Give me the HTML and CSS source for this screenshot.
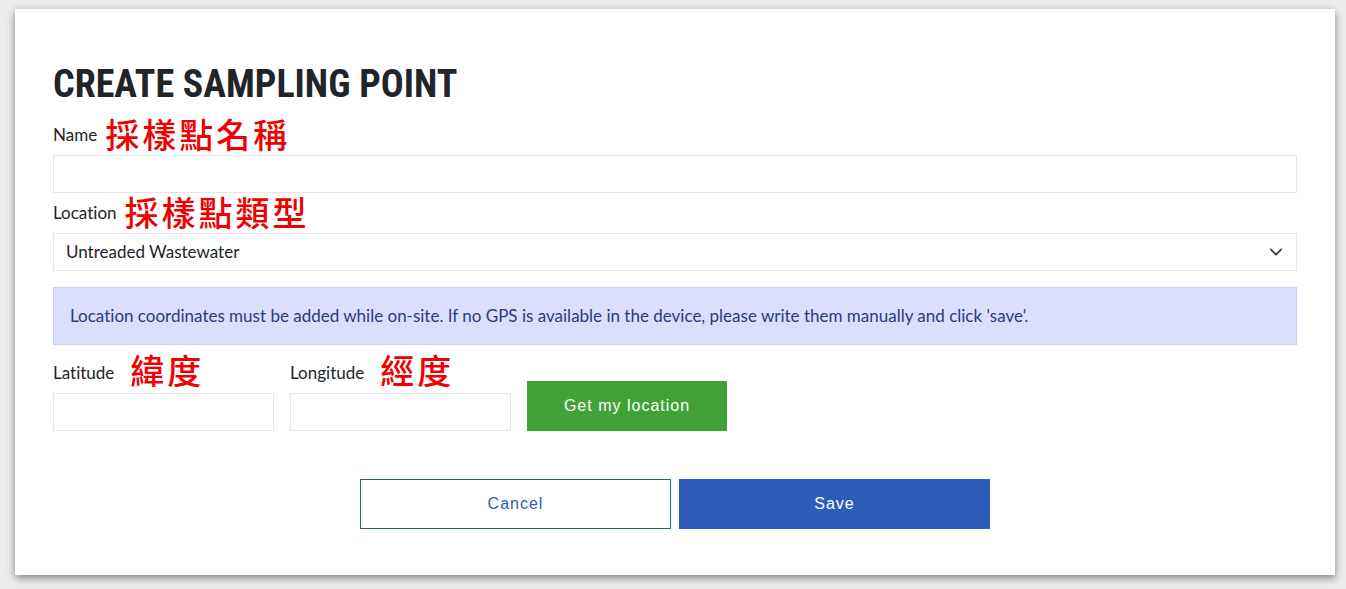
FILE: index.html
```html
<!DOCTYPE html>
<html lang="en">
<head>
<meta charset="utf-8">
<meta name="viewport" content="width=device-width, initial-scale=1">
<title>Create sampling point</title>
<link rel="stylesheet" href="styles.css">
</head>
<body>
<main class="card">
  <h1 class="title">CREATE SAMPLING POINT</h1>
  <form class="form">
    <div class="field">
      <label class="label" for="name">Name <span class="note" lang="zh-Hant">採樣點名稱</span></label>
      <input class="control" id="name" type="text">
    </div>
    <div class="field">
      <label class="label" for="location">Location <span class="note" lang="zh-Hant">採樣點類型</span></label>
      <div class="select-wrap">
        <select class="control select" id="location">
          <option>Untreaded Wastewater</option>
        </select>
        <svg class="chevron" viewBox="0 0 16 16" aria-hidden="true"><path d="M2 5l6 6 6-6"/></svg>
      </div>
    </div>
    <p class="alert">Location coordinates must be added while on-site. If no GPS is available in the device, please write them manually and click 'save'.</p>
    <div class="coords">
      <div class="field">
        <label class="label label-wide" for="latitude">Latitude <span class="note" lang="zh-Hant">緯度</span></label>
        <input class="control" id="latitude" type="text">
      </div>
      <div class="field">
        <label class="label label-wide" for="longitude">Longitude <span class="note" lang="zh-Hant">經度</span></label>
        <input class="control" id="longitude" type="text">
      </div>
      <button class="button button-locate" type="button">Get my location</button>
    </div>
    <div class="actions">
      <button class="button button-cancel" type="button">Cancel</button>
      <button class="button button-save" type="submit">Save</button>
    </div>
  </form>
</main>
</body>
</html>
```
FILE: styles.css
```css
* {
  box-sizing: border-box;
}

body {
  margin: 0;
  padding: 9px 11px 14px 15px;
  background: #ececec;
  color: #212529;
  font-family: Lato, "Noto Sans CJK TC", sans-serif;
  font-size: 17px;
  font-variant-ligatures: none;
  line-height: 24px;
}

.card {
  padding: 50px 38px 46px;
  background: #fff;
  box-shadow: 0 3px 8px rgba(0, 0, 0, 0.45);
}

.title {
  margin: 0 0 14px;
  font-family: "Roboto Condensed", "Liberation Sans Narrow", sans-serif;
  font-size: 38px;
  font-weight: 700;
  line-height: 50px;
}

.form {
  display: flex;
  flex-direction: column;
  gap: 8px;
}

.field {
  display: flex;
  flex-direction: column;
  gap: 8px;
  min-width: 0;
}

.label {
  display: flex;
  align-items: center;
  gap: 8px;
  height: 24px;
  white-space: nowrap;
}

.label-wide {
  gap: 16px;
}

.note {
  padding-bottom: 2px;
  color: #f00000;
  font-family: "Noto Sans CJK TC Medium", "Noto Sans CJK TC", sans-serif;
  font-size: 34px;
  font-weight: 500;
  letter-spacing: 3px;
  line-height: 24px;
}

.label-wide .note {
  padding-bottom: 6px;
}

.control {
  width: 100%;
  height: 38px;
  padding: 6px 12px;
  border: 1px solid #e6e6e6;
  border-radius: 0;
  background: #fff;
  color: inherit;
  font: inherit;
}

.select-wrap {
  position: relative;
}

.select {
  appearance: none;
  display: block;
}

.chevron {
  position: absolute;
  top: 12px;
  right: 14px;
  width: 14px;
  height: 14px;
  fill: none;
  stroke: #343a40;
  stroke-width: 2;
  stroke-linecap: round;
  stroke-linejoin: round;
  pointer-events: none;
}

.alert {
  margin: 8px 0;
  padding: 16px;
  border: 1px solid #c9cdf0;
  background: #dbdefd;
  color: #2c3a80;
}

.coords {
  display: grid;
  grid-template-columns: 221px 221px 200px;
  align-items: end;
  gap: 16px;
}

.button {
  height: 50px;
  padding: 0 16px;
  border: 1px solid transparent;
  border-radius: 0;
  font-family: "Liberation Sans", Arial, sans-serif;
  font-size: 16px;
  letter-spacing: 1px;
}

.button-locate {
  background: #41a337;
  color: #fff;
}

.actions {
  display: grid;
  grid-template-columns: 1fr 1fr;
  gap: 8px;
  width: 100%;
  max-width: 630px;
  margin: 40px auto 0;
}

.button-cancel {
  border-color: #2c5b9c;
  background: #fff;
  color: #2d5cb8;
}

.button-save {
  background: #2d5cb8;
  color: #fff;
}
```
